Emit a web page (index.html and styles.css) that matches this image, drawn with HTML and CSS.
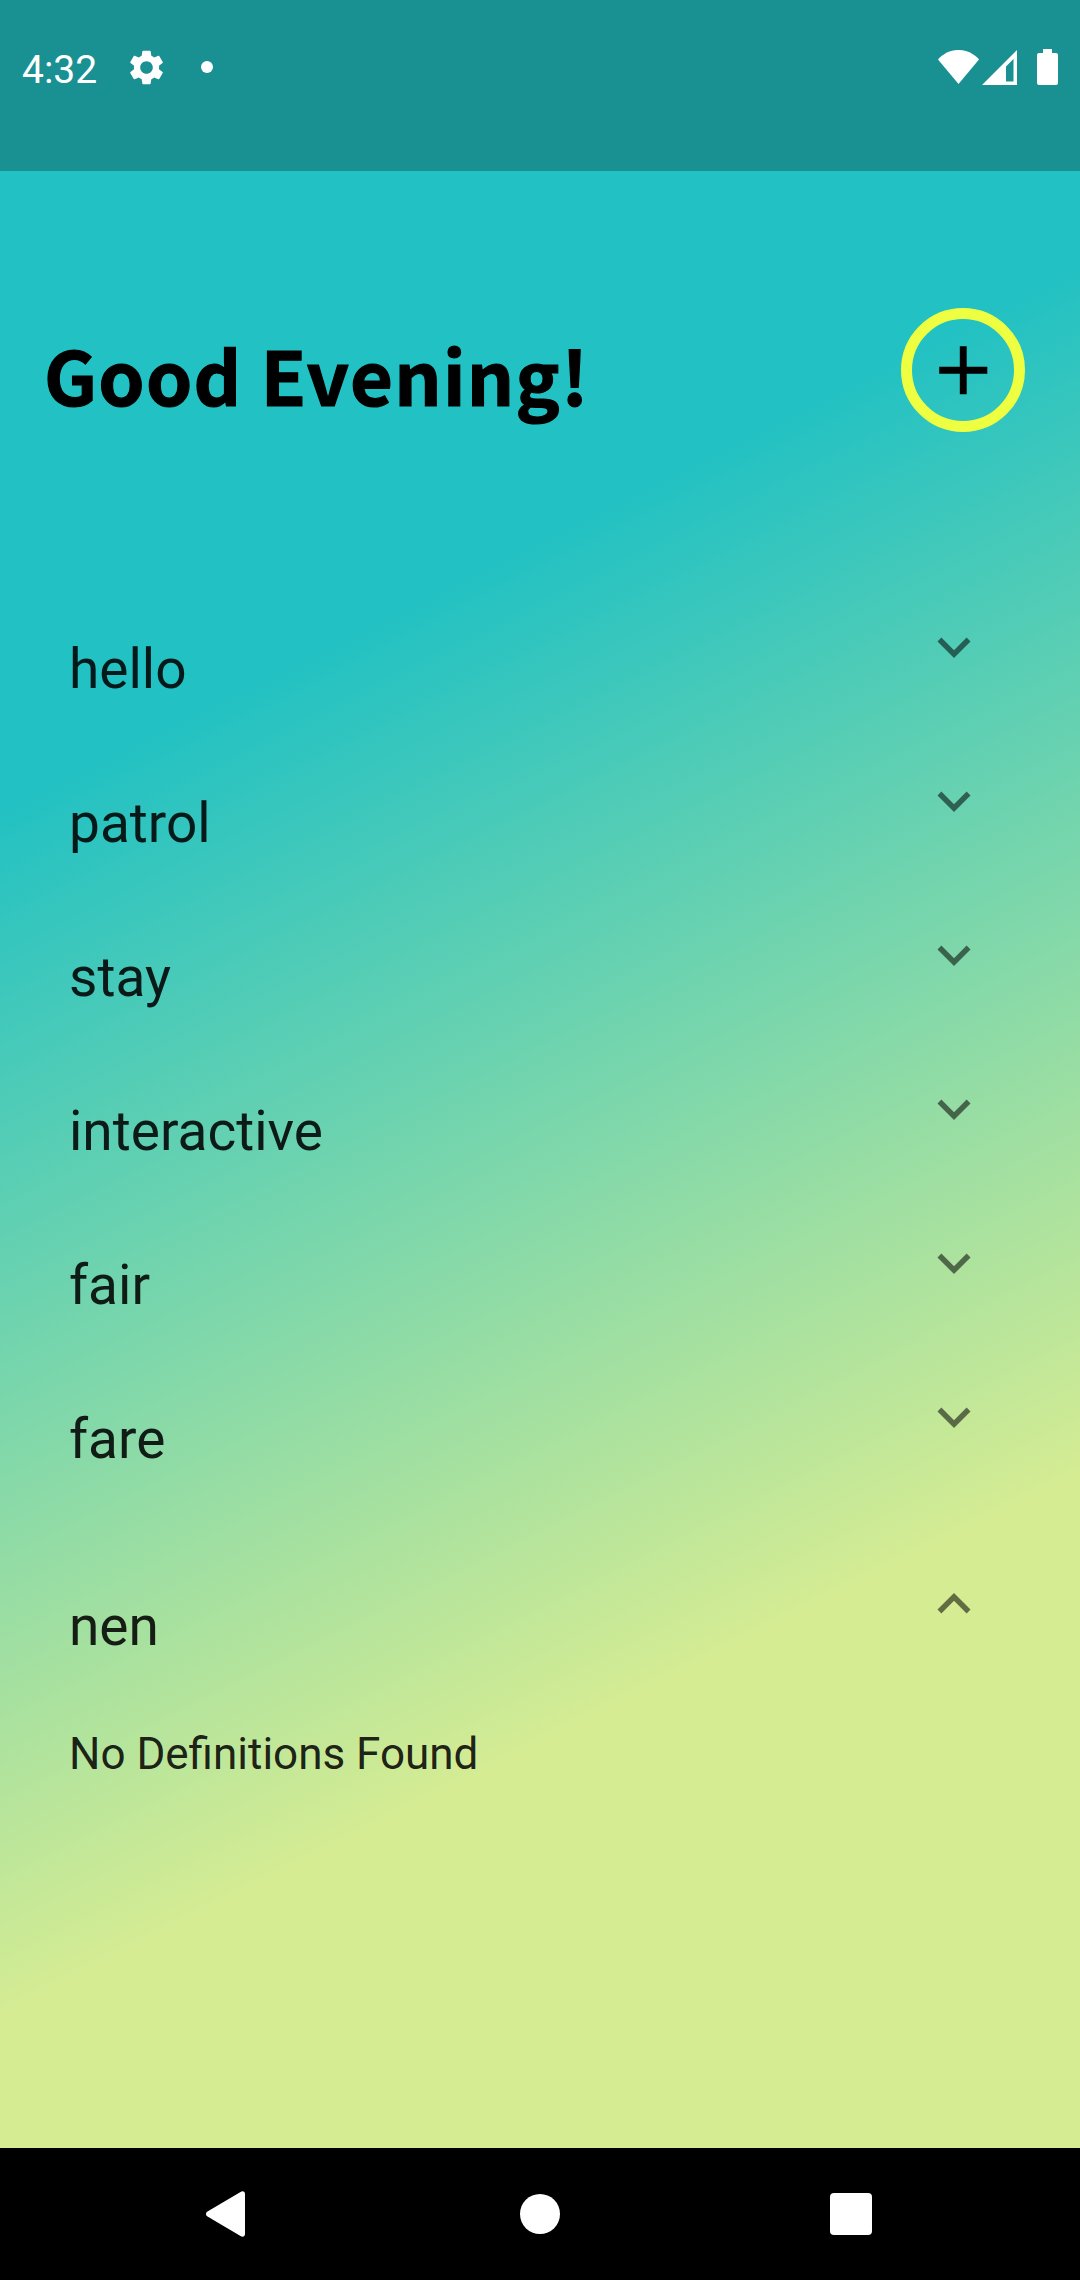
FILE: index.html
```html
<!DOCTYPE html>
<html lang="en">
<head>
<meta charset="utf-8">
<title>Good Evening</title>
<link rel="stylesheet" href="styles.css">
</head>
<body>
<div class="screen">
  <div class="status-bar">
    <span class="clock">4:32</span>
    <svg class="gear" viewBox="2 2 20 20"><path d="M19.14 12.94c.04-.3.06-.61.06-.94 0-.32-.02-.64-.07-.94l2.03-1.58c.18-.14.23-.41.12-.61l-1.92-3.32c-.12-.22-.37-.29-.59-.22l-2.39.96c-.5-.38-1.03-.7-1.62-.94l-.36-2.54c-.04-.24-.24-.41-.48-.41h-3.84c-.24 0-.43.17-.47.41l-.36 2.54c-.59.24-1.13.57-1.62.94l-2.39-.96c-.22-.08-.47 0-.59.22L2.74 8.87c-.12.21-.08.47.12.61l2.03 1.58c-.05.3-.09.63-.09.94s.02.64.07.94l-2.03 1.58c-.18.14-.23.41-.12.61l1.92 3.32c.12.22.37.29.59.22l2.39-.96c.5.38 1.03.7 1.62.94l.36 2.54c.05.24.24.41.48.41h3.84c.24 0 .44-.17.47-.41l.36-2.54c.59-.24 1.13-.56 1.62-.94l2.39.96c.22.08.47 0 .59-.22l1.92-3.32c.12-.22.07-.47-.12-.61l-2.01-1.58zM12 15.6c-1.98 0-3.6-1.62-3.6-3.6s1.62-3.6 3.6-3.6 3.6 1.62 3.6 3.6-1.62 3.6-3.6 3.6z"/></svg>
    <span class="dot"></span>
    <div class="indicators">
      <svg class="wifi" viewBox="0 0 41 34"><path d="M0 9.5C11-3.2 30-3.2 41 9.5L20.500 34z"/></svg>
      <svg class="signal" viewBox="0 0 35 35"><path fill-rule="evenodd" d="M35 0v35H0zM31.500 9L24 16.500V31.500h7.500z"/></svg>
      <svg class="battery" viewBox="0 0 21 36"><path d="M6 0h9v4h4a2 2 0 0 1 2 2v28a2 2 0 0 1-2 2H2a2 2 0 0 1-2-2V6a2 2 0 0 1 2-2h4z"/></svg>
    </div>
  </div>

  <header class="header">
    <h1 class="greeting">Good Evening!</h1>
    <button class="add" aria-label="Add word"><svg class="plus" viewBox="0 0 24 24"><path d="M19 13h-6v6h-2v-6H5v-2h6V5h2v6h6v2z"/></svg></button>
  </header>

  <main class="words">
    <div class="row"><span class="word">hello</span><svg class="chevron" viewBox="0 0 24 24"><path d="M16.590 8.590L12 13.170 7.410 8.590 6 10l6 6 6-6z"/></svg></div>
    <div class="row"><span class="word">patrol</span><svg class="chevron" viewBox="0 0 24 24"><path d="M16.590 8.590L12 13.170 7.410 8.590 6 10l6 6 6-6z"/></svg></div>
    <div class="row"><span class="word">stay</span><svg class="chevron" viewBox="0 0 24 24"><path d="M16.590 8.590L12 13.170 7.410 8.590 6 10l6 6 6-6z"/></svg></div>
    <div class="row"><span class="word">interactive</span><svg class="chevron" viewBox="0 0 24 24"><path d="M16.590 8.590L12 13.170 7.410 8.590 6 10l6 6 6-6z"/></svg></div>
    <div class="row"><span class="word">fair</span><svg class="chevron" viewBox="0 0 24 24"><path d="M16.590 8.590L12 13.170 7.410 8.590 6 10l6 6 6-6z"/></svg></div>
    <div class="row"><span class="word">fare</span><svg class="chevron" viewBox="0 0 24 24"><path d="M16.590 8.590L12 13.170 7.410 8.590 6 10l6 6 6-6z"/></svg></div>
    <div class="row open"><span class="word">nen</span><svg class="chevron" viewBox="0 0 24 24"><path d="M16.590 8.590L12 13.170 7.410 8.590 6 10l6 6 6-6z"/></svg></div>
    <p class="definition">No Definitions Found</p>
  </main>

  <nav class="nav-bar">
    <svg class="back" viewBox="0 0 39 46"><path d="M34.500 1C37 -.500 39 .800 39 3v40c0 2.200-2 3.500-4.500 2L1.500 25.500c-2-1.200-2-3.800 0-5z"/></svg>
    <span class="home"></span>
    <span class="recents"></span>
  </nav>
</div>
</body>
</html>
```
FILE: styles.css
```css
* {
  box-sizing: border-box;
}

body {
  margin: 0;
  font-family: Roboto, "Liberation Sans", sans-serif;
}

.screen {
  display: flex;
  flex-direction: column;
  width: 1080px;
  height: 2280px;
  overflow: hidden;
  /* angle follows the diagonal of the 1080x2148 content area */
  background: linear-gradient(153.306deg, #22c1c3 30%, #d5ec93 75%) 0 0 / 1080px 2148px no-repeat #000;
}

.status-bar {
  display: flex;
  align-items: flex-start;
  height: 171px;
  padding: 49px 22px 0;
  background: rgba(0, 0, 0, 0.25);
  color: #fff;
  fill: #fff;
}

.clock {
  width: 76px;
  margin-top: -2px;
  font-size: 39px;
  line-height: 46px;
}

.gear {
  width: 35px;
  height: 35px;
  margin: 1px 0 0 31px;
}

.dot {
  width: 12px;
  height: 12px;
  margin: 12px 0 0 37px;
  border-radius: 50%;
  background: #fff;
}

.indicators {
  display: flex;
  margin-left: auto;
}

.wifi {
  width: 41px;
  height: 34px;
  margin-top: 1px;
}

.signal {
  width: 35px;
  height: 35px;
  margin: 1px 20px 0 3px;
}

.battery {
  width: 21px;
  height: 36px;
}

.header {
  display: flex;
  justify-content: space-between;
  align-items: center;
  height: 124px;
  margin-top: 137px;
  padding: 0 55px 0 44px;
}

.greeting {
  margin: 7px 0 0;
  font-family: "Noto Sans CJK JP", "Noto Sans", sans-serif;
  font-size: 74px;
  font-weight: 700;
  line-height: 100px;
  letter-spacing: 1.3px;
  -webkit-text-stroke: 1.2px #000;
  white-space: nowrap;
}

.add {
  display: flex;
  align-items: center;
  justify-content: center;
  width: 124px;
  height: 124px;
  padding: 0;
  border: 11px solid #eeff41;
  border-radius: 50%;
  background: none;
}

.plus {
  flex: none;
  width: 82.5px;
  height: 82.5px;
}

.words {
  flex: 1;
  margin-top: 138px;
  color: rgba(0, 0, 0, 0.87);
}

.row {
  display: flex;
  justify-content: space-between;
  align-items: center;
  height: 154px;
  padding: 0 93px 0 69px;
}

.row.open {
  margin-top: 33px;
}

.word {
  margin-top: 44px;
  font-size: 55px;
  line-height: 64px;
}

.chevron {
  width: 66px;
  height: 66px;
  fill: rgba(0, 0, 0, 0.54);
}

.open .chevron {
  transform: rotate(180deg);
}

.definition {
  margin: 47px 0 0 69px;
  font-size: 44px;
  line-height: 52px;
}

.nav-bar {
  display: grid;
  grid-template-columns: 1fr 40px 1fr;
  align-items: center;
  height: 132px;
  padding: 0 208px;
  background: #000;
  fill: #fff;
}

.back {
  width: 39px;
  height: 46px;
  margin-left: -2px;
}

.home {
  width: 40px;
  height: 40px;
  border-radius: 50%;
  background: #fff;
}

.recents {
  justify-self: end;
  width: 42px;
  height: 42px;
  border-radius: 4px;
  background: #fff;
}
```
